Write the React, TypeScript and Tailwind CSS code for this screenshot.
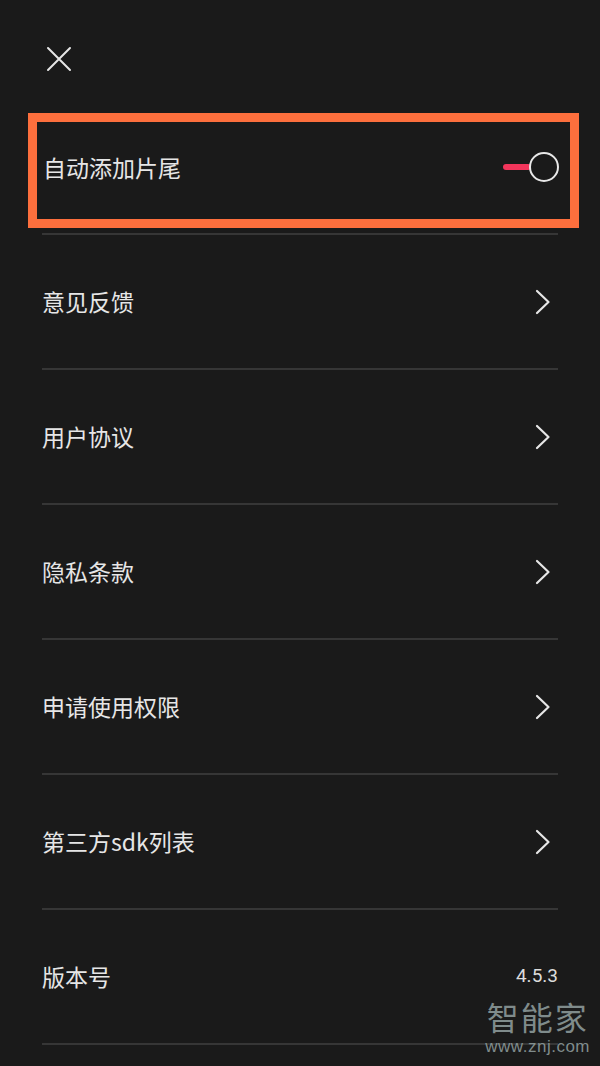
const rows = ["意见反馈", "用户协议", "隐私条款", "申请使用权限", "第三方sdk列表"];

function CloseIcon() {
  return (
    <svg width="26" height="26" viewBox="0 0 26 26" fill="none" stroke="#e6e6e6" strokeWidth="2" strokeLinecap="round">
      <path d="M2 2 L24 24 M24 2 L2 24" />
    </svg>
  );
}

function Chevron() {
  return (
    <svg width="16" height="26" viewBox="0 0 16 26" fill="none" stroke="#e6e6e6" strokeWidth="2.2" strokeLinecap="round" strokeLinejoin="round">
      <path d="M2 2 L13.5 13 L2 24" />
    </svg>
  );
}

function Toggle() {
  return (
    <div className="flex items-center">
      <div className="w-[28px] h-[6px] rounded-full bg-[#f2355b] -mr-[2px]" />
      <div className="w-[30px] h-[30px] rounded-full border-2 border-[#e8e8e8] bg-[#1a1a1a]" />
    </div>
  );
}

export default function App() {
  return (
    <div
      className="relative w-[600px] h-[1066px] overflow-hidden bg-[#1a1a1a] text-[#e6e6e6]"
      style={{ fontFamily: '"Noto Sans CJK SC", "Noto Sans", sans-serif' }}
    >
      <div className="h-[113px] pl-[46px] pt-[46px]">
        <CloseIcon />
      </div>

      <div className="ml-[28px] mr-[21px] h-[115px] border-[9px] border-[#fd6f3d] flex items-center justify-between pl-[6px] pr-[11px] pb-[7px]">
        <span className="text-[23px]">自动添加片尾</span>
        <Toggle />
      </div>

      <div className="mx-[42px] mt-[5px] border-t-2 border-[#363636]">
        {rows.map((r) => (
          <div key={r} className="h-[135px] border-b-2 border-[#363636] flex items-center justify-between">
            <span className="text-[23px]">{r}</span>
            <div className="mr-[7px]">
              <Chevron />
            </div>
          </div>
        ))}
        <div className="h-[135px] border-b-2 border-[#363636] flex items-center justify-between">
          <span className="text-[23px]">版本号</span>
          <span className="text-[19px] text-[#dcdcdc]" style={{ fontFamily: "Roboto, sans-serif" }}>4.5.3</span>
        </div>
      </div>

      <div className="absolute right-[10px] bottom-[11px] flex flex-col items-center text-[#8a9898] opacity-90">
        <span className="text-[32px] leading-none tracking-[2px]">智能家</span>
        <span className="text-[17px] leading-none mt-[6px] tracking-[0.5px]" style={{ fontFamily: '"Liberation Sans", sans-serif' }}>www.znj.com</span>
      </div>
    </div>
  );
}
